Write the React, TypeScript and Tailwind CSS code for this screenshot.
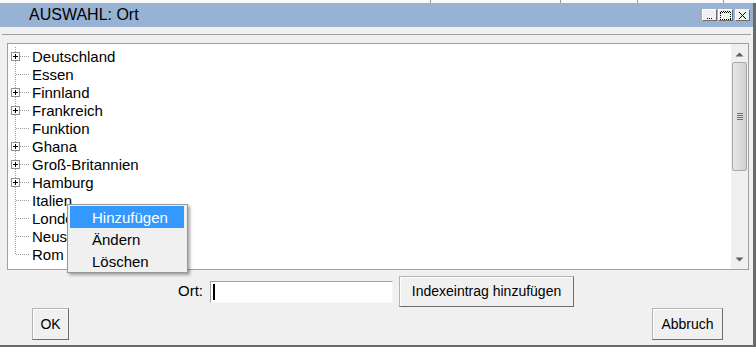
import React from 'react';

const items = [
  { name: 'Deutschland', plus: true },
  { name: 'Essen', plus: false },
  { name: 'Finnland', plus: true },
  { name: 'Frankreich', plus: true },
  { name: 'Funktion', plus: false },
  { name: 'Ghana', plus: true },
  { name: 'Groß-Britannien', plus: true },
  { name: 'Hamburg', plus: true },
  { name: 'Italien', plus: false },
  { name: 'London', plus: false },
  { name: 'Neuss', plus: false },
  { name: 'Rom', plus: false },
];

function Connector({ plus, last }: { plus: boolean; last: boolean }) {
  return (
    <svg width="24" height="18" className="shrink-0" shapeRendering="crispEdges">
      <line x1="7.5" y1="0" x2="7.5" y2={last ? 9 : 18} stroke="#a0a0a0" strokeDasharray="1 1" />
      <line x1={plus ? 12 : 8} y1="9.5" x2="22" y2="9.5" stroke="#a0a0a0" strokeDasharray="1 1" />
      {plus && (
        <>
          <rect x="3.5" y="5.5" width="8" height="8" fill="#fff" stroke="#919191" />
          <line x1="5" y1="9.5" x2="10" y2="9.5" stroke="#000" />
          <line x1="7.5" y1="7" x2="7.5" y2="12" stroke="#000" />
        </>
      )}
    </svg>
  );
}

function WinButton({ children }: { children: React.ReactNode }) {
  return (
    <div className="w-[15px] h-[12px] bg-[#f0f0f0] border border-[#ffffff] border-r-[#6d6d6d] border-b-[#6d6d6d] flex items-center justify-center">
      {children}
    </div>
  );
}

function Button({ label, className }: { label: string; className: string }) {
  return (
    <div
      className={`flex items-center justify-center bg-[#f0f0f0] border border-[#b4b4b4] border-r-[#6e6e6e] border-b-[#6e6e6e] shadow-[inset_1px_1px_0_#ffffff] text-[14px] text-black ${className}`}
    >
      {label}
    </div>
  );
}

export default function App() {
  return (
    <div
      className="relative w-[756px] h-[347px] overflow-hidden bg-[#f0f0f0] flex flex-col"
      style={{ fontFamily: '"Liberation Sans", Arial, sans-serif' }}
    >
      {/* strip of the window behind */}
      <div className="h-[3px] bg-[#f9f9f9] flex shrink-0">
        <div className="w-[430px]" />
        <div className="w-px bg-[#9a9a9a]" />
        <div className="w-[129px]" />
        <div className="w-px bg-[#9a9a9a]" />
        <div className="w-[76px]" />
        <div className="w-px bg-[#9a9a9a]" />
        <div className="w-[85px]" />
        <div className="w-px bg-[#9a9a9a]" />
      </div>

      <div className="flex-1 flex flex-col border-r-[3px] border-b-[2px] border-[#6b6b6b]">
        {/* title bar */}
        <div className="h-[24px] bg-[#97b2d2] flex items-center shrink-0">
          <span className="pl-[29px] text-[16px] text-black leading-none">AUSWAHL: Ort</span>
          <div className="ml-auto mr-[3px] flex gap-[1px]">
            <WinButton>
              <svg width="9" height="8" shapeRendering="crispEdges">
                <line x1="2" y1="7.5" x2="7" y2="7.5" stroke="#000" strokeDasharray="1 1" />
              </svg>
            </WinButton>
            <WinButton>
              <svg width="11" height="9" shapeRendering="crispEdges">
                <rect x="0.5" y="0.5" width="10" height="8" fill="none" stroke="#000" strokeDasharray="1 1" />
                <line x1="0" y1="1.5" x2="11" y2="1.5" stroke="#000" strokeDasharray="1 1" />
              </svg>
            </WinButton>
            <div className="ml-[1px]">
              <WinButton>
                <svg width="9" height="9">
                  <path d="M1 1 L8 8 M8 1 L1 8" stroke="#000" strokeWidth="1" />
                </svg>
              </WinButton>
            </div>
          </div>
        </div>

        <div className="mt-[7px] mx-[2px] h-px bg-[#a0a0a0]" />

        {/* tree box */}
        <div className="mt-[8px] ml-[7px] w-[742px] h-[227px] border border-[#a0a0a0] flex">
          <div className="flex-1 bg-white pt-[3px] overflow-hidden">
            {items.map((it, i) => (
              <div key={it.name} className="h-[18px] flex items-center text-[15px] text-black leading-none">
                <Connector plus={it.plus} last={i === items.length - 1} />
                <span>{it.name}</span>
              </div>
            ))}
          </div>
          <div className="w-[17px] bg-[#f0f0f0] flex flex-col items-center">
            <svg width="9" height="5" className="mt-[8px]">
              <path d="M0.5 4.5 L4.5 0.5 L8.5 4.5 Z" fill="#5f5f5f" />
            </svg>
            <div className="mt-[5px] w-[15px] h-[109px] rounded-[2px] border border-[#a9a9a9] bg-[linear-gradient(90deg,#e6e6e6,#dadada_60%,#cfcfcf)] flex flex-col items-center justify-center gap-[1px]">
              <div className="w-[6px] h-px bg-[#6f6f6f]" />
              <div className="w-[6px] h-px bg-[#6f6f6f]" />
              <div className="w-[6px] h-px bg-[#6f6f6f]" />
              <div className="w-[6px] h-px bg-[#6f6f6f]" />
            </div>
            <svg width="9" height="5" className="mt-auto mb-[7px]">
              <path d="M0.5 0.5 L4.5 4.5 L8.5 0.5 Z" fill="#5f5f5f" />
            </svg>
          </div>
        </div>

        {/* input row */}
        <div className="mt-[6px] h-[32px] flex items-start">
          <div className="h-[31px] flex items-center">
            <span className="ml-[178px] text-[15px] text-black">Ort:</span>
            <div className="ml-[7px] w-[183px] h-[22px] bg-white border border-[#a0a0a0] border-r-[#f8f8f8] border-b-[#f8f8f8] flex items-center">
              <div className="ml-[2px] w-[2px] h-[16px] bg-black" />
            </div>
            <Button label="Indexeintrag hinzufügen" className="ml-[6px] w-[175px] h-[31px]" />
          </div>
        </div>

        {/* OK / Abbruch */}
        <div className="flex items-start">
          <Button label="OK" className="ml-[32px] w-[37px] h-[32px]" />
          <Button label="Abbruch" className="ml-auto mr-[30px] w-[71px] h-[32px]" />
        </div>
      </div>

      {/* context menu */}
      <div className="absolute left-[67px] top-[204px] w-[121px] h-[69px] bg-[#f0f0f0] border border-[#979797] shadow-[2px_2px_3px_rgba(0,0,0,0.35)] pt-[1px] pl-[2px] pr-[3px] text-[15px] leading-none">
        <div className="h-[22px] bg-[#3399ff] text-white flex items-center pl-[22px]">Hinzufügen</div>
        <div className="h-[22px] text-black flex items-center pl-[22px]">Ändern</div>
        <div className="h-[22px] text-black flex items-center pl-[22px]">Löschen</div>
      </div>
    </div>
  );
}
